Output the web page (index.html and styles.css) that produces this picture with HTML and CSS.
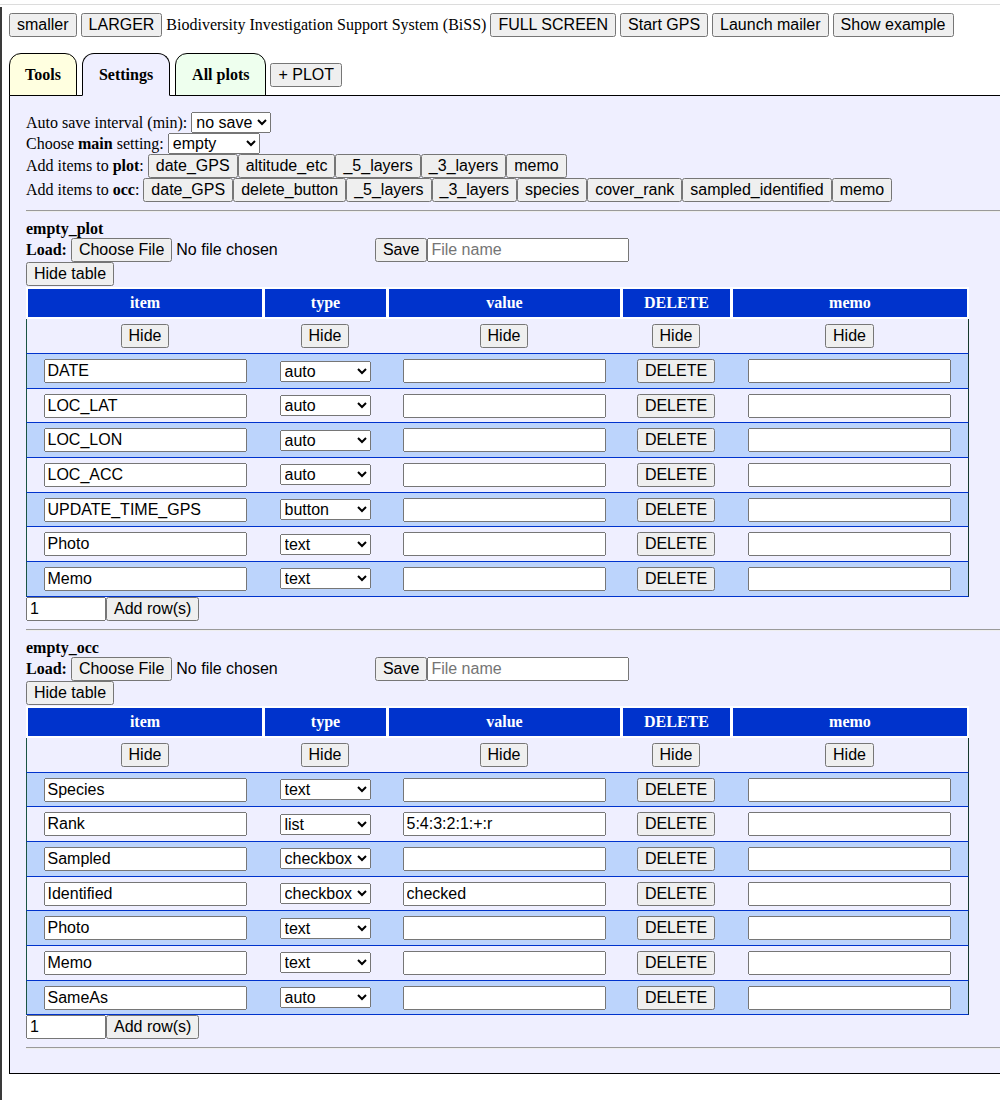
FILE: index.html
```html
<!DOCTYPE html>
<html lang="en">
<head>
<meta charset="utf-8">
<title>BiSS</title>
<link rel="stylesheet" href="styles.css">
</head>
<body>
<div class="topline"></div>
<div class="page">
  <div class="toolbar"><button>smaller</button> <button>LARGER</button> <span class="title">Biodiversity Investigation Support System (BiSS)</span> <button>FULL SCREEN</button> <button>Start GPS</button> <button>Launch mailer</button> <button>Show example</button></div>

  <div class="tabs">
    <div class="tab tab-tools">Tools</div>
    <div class="tab tab-settings active">Settings</div>
    <div class="tab tab-plots">All plots</div>
    <button class="add-plot">+ PLOT</button>
  </div>

  <div class="panel">
    <div class="settings">
      <div class="line">Auto save interval (min): <select class="sel-save"><option>no save</option><option>1</option><option>5</option><option>10</option></select></div>
      <div class="line">Choose <b>main</b> setting: <select class="sel-main"><option>empty</option><option>default</option></select></div>
      <div class="line">Add items to <b>plot</b>: <span class="group"><button>date_GPS</button><button>altitude_etc</button><button>_5_layers</button><button>_3_layers</button><button>memo</button></span></div>
      <div class="line">Add items to <b>occ</b>: <span class="group"><button>date_GPS</button><button>delete_button</button><button>_5_layers</button><button>_3_layers</button><button>species</button><button>cover_rank</button><button>sampled_identified</button><button>memo</button></span></div>
    </div>
    <hr>

    <section class="sheet">
      <div class="sheet-title">empty_plot</div>
      <div class="load"><b>Load:</b> <input type="file" class="file"> <button class="save">Save</button><input type="text" class="fname" placeholder="File name"></div>
      <div><button>Hide table</button></div>
      <table class="grid">
        <colgroup><col class="c1"><col class="c2"><col class="c3"><col class="c4"><col class="c5"></colgroup>
        <thead><tr><th>item</th><th>type</th><th>value</th><th>DELETE</th><th>memo</th></tr></thead>
        <tbody>
          <tr class="hide-row"><td><button>Hide</button></td><td><button>Hide</button></td><td><button>Hide</button></td><td><button>Hide</button></td><td><button>Hide</button></td></tr>
          <tr class="alt"><td><input class="cell" value="DATE"></td><td><select class="type"><option selected>auto</option><option>text</option><option>list</option><option>checkbox</option><option>button</option></select></td><td><input class="cell" value=""></td><td><button>DELETE</button></td><td><input class="cell" value=""></td></tr>
          <tr><td><input class="cell" value="LOC_LAT"></td><td><select class="type"><option selected>auto</option><option>text</option><option>list</option><option>checkbox</option><option>button</option></select></td><td><input class="cell" value=""></td><td><button>DELETE</button></td><td><input class="cell" value=""></td></tr>
          <tr class="alt"><td><input class="cell" value="LOC_LON"></td><td><select class="type"><option selected>auto</option><option>text</option><option>list</option><option>checkbox</option><option>button</option></select></td><td><input class="cell" value=""></td><td><button>DELETE</button></td><td><input class="cell" value=""></td></tr>
          <tr><td><input class="cell" value="LOC_ACC"></td><td><select class="type"><option selected>auto</option><option>text</option><option>list</option><option>checkbox</option><option>button</option></select></td><td><input class="cell" value=""></td><td><button>DELETE</button></td><td><input class="cell" value=""></td></tr>
          <tr class="alt"><td><input class="cell" value="UPDATE_TIME_GPS"></td><td><select class="type"><option>auto</option><option>text</option><option>list</option><option>checkbox</option><option selected>button</option></select></td><td><input class="cell" value=""></td><td><button>DELETE</button></td><td><input class="cell" value=""></td></tr>
          <tr><td><input class="cell" value="Photo"></td><td><select class="type"><option>auto</option><option selected>text</option><option>list</option><option>checkbox</option><option>button</option></select></td><td><input class="cell" value=""></td><td><button>DELETE</button></td><td><input class="cell" value=""></td></tr>
          <tr class="alt"><td><input class="cell" value="Memo"></td><td><select class="type"><option>auto</option><option selected>text</option><option>list</option><option>checkbox</option><option>button</option></select></td><td><input class="cell" value=""></td><td><button>DELETE</button></td><td><input class="cell" value=""></td></tr>
        </tbody>
      </table>
      <div class="add"><input type="text" class="count" value="1"><button>Add row(s)</button></div>
    </section>
    <hr>

    <section class="sheet">
      <div class="sheet-title">empty_occ</div>
      <div class="load"><b>Load:</b> <input type="file" class="file"> <button class="save">Save</button><input type="text" class="fname" placeholder="File name"></div>
      <div><button>Hide table</button></div>
      <table class="grid">
        <colgroup><col class="c1"><col class="c2"><col class="c3"><col class="c4"><col class="c5"></colgroup>
        <thead><tr><th>item</th><th>type</th><th>value</th><th>DELETE</th><th>memo</th></tr></thead>
        <tbody>
          <tr class="hide-row"><td><button>Hide</button></td><td><button>Hide</button></td><td><button>Hide</button></td><td><button>Hide</button></td><td><button>Hide</button></td></tr>
          <tr class="alt"><td><input class="cell" value="Species"></td><td><select class="type"><option>auto</option><option selected>text</option><option>list</option><option>checkbox</option><option>button</option></select></td><td><input class="cell" value=""></td><td><button>DELETE</button></td><td><input class="cell" value=""></td></tr>
          <tr><td><input class="cell" value="Rank"></td><td><select class="type"><option>auto</option><option>text</option><option selected>list</option><option>checkbox</option><option>button</option></select></td><td><input class="cell" value="5:4:3:2:1:+:r"></td><td><button>DELETE</button></td><td><input class="cell" value=""></td></tr>
          <tr class="alt"><td><input class="cell" value="Sampled"></td><td><select class="type"><option>auto</option><option>text</option><option>list</option><option selected>checkbox</option><option>button</option></select></td><td><input class="cell" value=""></td><td><button>DELETE</button></td><td><input class="cell" value=""></td></tr>
          <tr><td><input class="cell" value="Identified"></td><td><select class="type"><option>auto</option><option>text</option><option>list</option><option selected>checkbox</option><option>button</option></select></td><td><input class="cell" value="checked"></td><td><button>DELETE</button></td><td><input class="cell" value=""></td></tr>
          <tr class="alt"><td><input class="cell" value="Photo"></td><td><select class="type"><option>auto</option><option selected>text</option><option>list</option><option>checkbox</option><option>button</option></select></td><td><input class="cell" value=""></td><td><button>DELETE</button></td><td><input class="cell" value=""></td></tr>
          <tr><td><input class="cell" value="Memo"></td><td><select class="type"><option>auto</option><option selected>text</option><option>list</option><option>checkbox</option><option>button</option></select></td><td><input class="cell" value=""></td><td><button>DELETE</button></td><td><input class="cell" value=""></td></tr>
          <tr class="alt"><td><input class="cell" value="SameAs"></td><td><select class="type"><option selected>auto</option><option>text</option><option>list</option><option>checkbox</option><option>button</option></select></td><td><input class="cell" value=""></td><td><button>DELETE</button></td><td><input class="cell" value=""></td></tr>
        </tbody>
      </table>
      <div class="add"><input type="text" class="count" value="1"><button>Add row(s)</button></div>
    </section>
    <hr>
  </div>
</div>
</body>
</html>
```

FILE: styles.css
```css
html, body {
  margin: 0;
  background: #fff;
}
body {
  font-family: "Liberation Serif", "Times New Roman", serif;
  font-size: 16px;
  color: #000;
}
button, input, select {
  font-family: "Liberation Sans", Arial, sans-serif;
  font-size: 16px;
}
.topline {
  height: 4px;
  border-bottom: 1px solid #dcdcdc;
}
.page {
  margin-top: 2px;
  border-left: 2px solid #3a3a3a;
  padding: 6px 0 26px 7px;
}
.toolbar {
  line-height: 24px;
}
.tabs {
  display: flex;
  align-items: center;
  gap: 5px;
  margin-top: 16px;
  margin-bottom: -1px;
}
.tab {
  position: relative;
  z-index: 1;
  border: 1px solid #000;
  border-radius: 12px 12px 0 0;
  padding: 12px 15px 11px;
  line-height: 18px;
  font-weight: bold;
}
.tab-tools { background: #ffffe0; }
.tab-settings { background: #efefff; border-bottom-color: #efefff; padding-left: 16px; padding-right: 16px; }
.tab-plots { background: #eeffee; padding-left: 16px; padding-right: 16px; }
.add-plot { margin-left: -1px; }
.panel {
  background: #efefff;
  border: 1px solid #000;
  border-right: none;
  padding: 16px 0 16px 16px;
}
.settings .line {
  line-height: 18px;
}
.sel-save { width: 80px; }
.sel-main { width: 92px; }
.group button { margin: 0; }
hr {
  margin: 8px 0;
  border: none;
  border-top: 1px solid #9a9a9a;
  border-bottom: 1px solid #eeeeee;
}
.sheet-title {
  font-weight: bold;
  line-height: 18px;
}
.load b { font-weight: bold; }
.file { width: 300px; }
.save { margin-left: 0; }
.fname { width: 202px; box-sizing: border-box; margin-left: 0; }
.grid {
  width: 943px;
  table-layout: fixed;
  border-collapse: separate;
  border-spacing: 0;
  margin: 1px 0 0 0;
}
.c1 { width: 237px; }
.c2 { width: 124px; }
.c3 { width: 234px; }
.c4 { width: 110px; }
.c5 { width: 238px; }
.grid th {
  background: #0033cc;
  color: #fff;
  font-weight: bold;
  line-height: 18px;
  padding: 5px 0;
  border: solid #fff;
  border-width: 2px 1px 2px 2px;
}
.grid th:last-child { border-right-width: 2px; }
.grid td {
  text-align: center;
  vertical-align: middle;
  padding: 5px 0 4.67px;
  border-top: 1px solid #0033cc;
}
.grid tr.hide-row td { border-top: none; padding: 5px 0; }
.grid tbody tr:last-child td { border-bottom: 1px solid #0033cc; }
.grid td:first-child { border-left: 1px solid #1b5444; }
.grid td:last-child { border-right: 1px solid #17392d; }
.grid tr.alt td { background: #bcd4fc; }
.cell {
  width: 203px;
  box-sizing: border-box;
}
.type { width: 91px; }
.count {
  width: 80px;
  box-sizing: border-box;
}
```
